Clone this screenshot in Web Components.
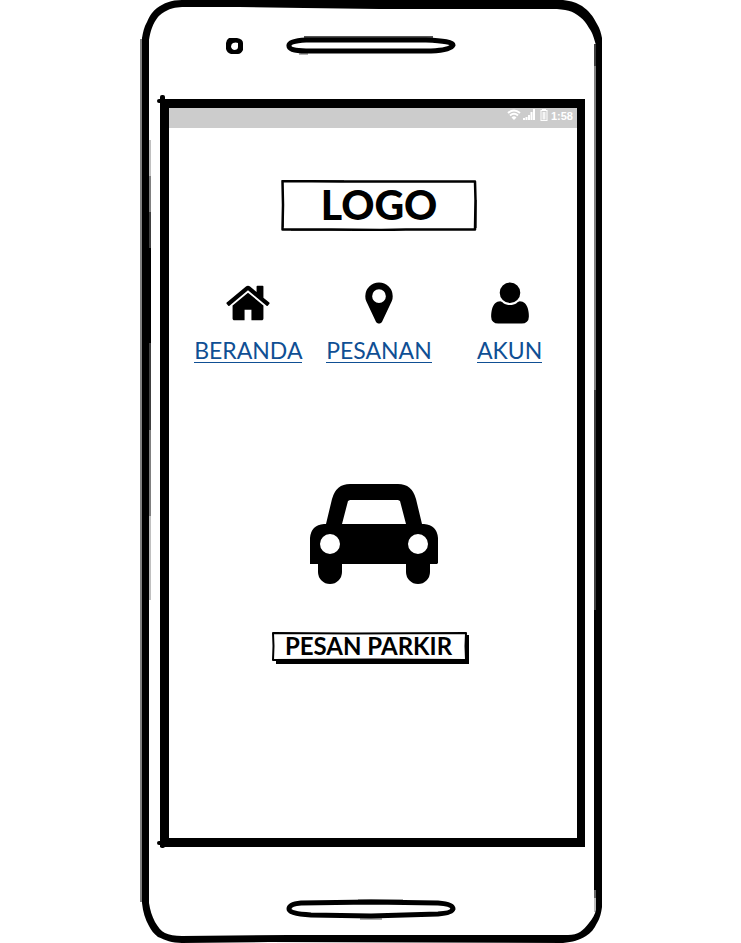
<!DOCTYPE html>
<html lang="id">
<head>
<meta charset="utf-8">
<meta name="viewport" content="width=device-width, initial-scale=1">
<title>Parkir</title>
<style>
  html, body { margin: 0; background: #fff; }
  body { font-family: Lato, "Open Sans", sans-serif; color: #000; }
</style>
</head>
<body>
<phone-frame>
  <status-bar slot="status" time="1:58"></status-bar>
  <app-header>
    <app-logo>LOGO</app-logo>
    <app-nav>
      <nav-item icon="home" href="#beranda">BERANDA</nav-item>
      <nav-item icon="pin" href="#pesanan">PESANAN</nav-item>
      <nav-item icon="user" href="#akun">AKUN</nav-item>
    </app-nav>
  </app-header>
  <park-action>PESAN PARKIR</park-action>
</phone-frame>

<script>
const define = (name, html, setup) => {
  const tpl = document.createElement('template');
  tpl.innerHTML = html;
  customElements.define(name, class extends HTMLElement {
    constructor() {
      super();
      this.attachShadow({ mode: 'open' }).append(tpl.content.cloneNode(true));
    }
    connectedCallback() { if (setup) setup(this, this.shadowRoot); }
  });
};

define('phone-frame', `
  <style>
    :host { display: grid; grid-template-rows: 99px 1fr 96px; position: relative; box-sizing: border-box;
      width: 100%; max-width: 463px; min-height: 100vh; margin: 0 auto; }
    .outline { position: absolute; inset: 0; width: 100%; height: 100%; pointer-events: none; }
    .ear, .chin { display: grid; position: relative; }
    .ear { grid-template-columns: 106px 1fr 106px; align-items: start; padding-top: 34px; }
    .ear .cam { justify-self: end; }
    .ear .speaker, .chin .speaker { justify-self: center; }
    .chin { align-items: start; padding-top: 51px; }
    svg { display: block; }
    .screen { position: relative; display: flex; flex-direction: column; margin: 0 17px 0 21px; border: 9px solid #000; border-right-width: 8px; }
    .screen::before, .screen::after { content: ""; position: absolute; left: -12px; width: 5px; height: 4px; border-radius: 2px; background: #000; }
    .screen::before { top: -9px; }
    .screen::after { bottom: -7px; }
    .tick { position: absolute; left: -9px; width: 5px; height: 6px; border-radius: 2px; background: #000; }
    .tick.t { top: -13px; }
    .tick.b { bottom: -10px; }
  </style>
  <svg class="outline" viewBox="0 0 463 943" preserveAspectRatio="none" aria-hidden="true">
    <path fill="#808080" d="M1 39H3V902H1zM455 66H457V390H455z"/>
    <path fill="#404040" d="M455 44H457V66H455zM455 390H457V610H455z"/>
    <path fill="#c0c0c0" d="M10 140h2v460h-2z"/>
    <path fill="#808080" d="M10 176h2v340h-2z"/>
    <path fill="#404040" d="M10 212h2v218h-2z"/>
    <path d="M10 248h2v95h-2zM455 610h3v280h-3z"/>
    <path fill="#666" d="M455 890h2v8h-2z"/><path fill="#bbb" d="M455 898h2v14h-2z"/>
    <path fill-rule="evenodd" d="M3 38C4 32 5 27 8 22C11 15 14 11 18 8C25 3 32 0 43 0H424C433 1 438 3 443 6C450 11 454 16 458 24C461 29 462 33 463 38V907C462 914 461 918 458 923C455 929 452 933 447 936C440 940 434 942 424 943L130 942L43 943C33 943 26 940 19 937C15 934 12 930 10 926C6 919 4 912 3 903zM10 40V903C11 910 13 916 16 922C19 927 22 931 26 933C30 935 36 936 43 936L150 935H429C434 935 438 934 441 932C444 930 447 927 450 923C454 918 456 914 457 910V45C455 39 454 33 450 28C447 23 445 20 441 17C434 11 427 9 413 9H240L165 8L100 7H46C38 7 33 8 29 10C24 12 21 15 19 17C14 23 11 32 10 40z"/>
  </svg>
  <div class="ear">
    <svg class="cam" width="24" height="24" viewBox="0 0 24 24" aria-hidden="true">
      <path fill-rule="evenodd" d="M8 4H16Q22 5 22 9V16Q20 20 17 20H10Q6 19 5 15V9Q5 6 8 4zM12 9Q10 10 10 13Q11 16 13 16Q17 16 17 13V9Q15 8 12 9z"/>
    </svg>
    <svg class="speaker" width="170" height="24" viewBox="0 0 170 24" aria-hidden="true">
      <path fill="#b0b0b0" d="M13 18h9v3h-9z"/>
      <path fill="#555" d="M18 2h129v2H18z"/>
      <path fill="none" stroke="#000" stroke-width="5" d="M20 6H140Q167 7 167 11Q165 16 145 17H20Q3 17 3 12Q2 7 20 6z"/>
    </svg>
  </div>
  <main class="screen">
    <i class="tick t"></i><i class="tick b"></i>
    <slot name="status"></slot>
    <slot></slot>
  </main>
  <div class="chin">
    <svg class="speaker" width="170" height="24" viewBox="0 0 170 24" aria-hidden="true">
      <path fill="#b0b0b0" d="M72 1h45v2H72zM74 20h22v2H74z"/>
      <path fill="none" stroke="#000" stroke-width="5" d="M15 5L85 4L152 5Q167 6 167 11Q166 15 152 16L85 18L25 17Q3 16 3 11Q3 6 15 5z"/>
    </svg>
  </div>
`);

define('status-bar', `
  <style>
    :host { display: flex; justify-content: flex-end; align-items: flex-start; gap: 3px; height: 20px; box-sizing: border-box;
      padding: 1px 4px 0 0; background: #ccc; color: #fff; font: 600 11px/14px "Liberation Sans", sans-serif; }
    svg { display: block; fill: #fff; }
  </style>
  <svg width="41" height="14" viewBox="0 0 41 14" aria-hidden="true">
    <g fill="none" stroke="#fff" stroke-width="2"><path d="M1 4Q7 -1 13 4M3 6.500Q7 3 11 6.500"/></g>
    <path d="M4.500 8.500Q7 6 9.500 8.500L7 11z"/>
    <path d="M16 9h2v2h-2zM18.500 8h2v3h-2zM21 6h2v5h-2zM23.500 3h2v8h-2zM26 0h2v11h-2z"/>
    <path fill-rule="evenodd" d="M35 0h4v1h1.500v11h-7V1H35zM34.500 2v9h5V2z"/><path opacity=".8" d="M35.500 3h3v7.500h-3z"/>
  </svg>
  <time></time>
`, (el, root) => { root.querySelector('time').textContent = el.getAttribute('time'); });

define('app-header', `
  <style>:host { display: flex; flex-direction: column; align-items: center; gap: 48px; padding: 52px 2px 0 14px; }</style>
  <slot></slot>
`);

define('app-logo', `
  <style>
    :host { display: block; position: relative; }
    h1 { margin: 0; box-sizing: border-box; width: 196px; height: 51px; text-align: center; font-size: 41px; line-height: 50px; font-weight: 900; }
    svg { position: absolute; inset: 0; width: 100%; height: 100%; }
  </style>
  <svg viewBox="0 0 196 51" preserveAspectRatio="none" aria-hidden="true">
    <path fill="#777" d="M35 0h28v1H35zM10 50h60v1H10zM195 20h1v28h-1zM2 25h1v22H2z"/>
    <path fill="none" stroke="#000" stroke-width="2.500" stroke-linejoin="round" d="M1.500 1L60 1.500L194 1.500L194.500 20L194 49.500L125 49.500L100 50L50 49.500L1.500 49.500L2 25z"/>
  </svg>
  <h1><slot></slot></h1>
`);

define('app-nav', `
  <style>:host { display: block; width: 100%; } nav { display: grid; grid-template-columns: repeat(3, 1fr); }</style>
  <nav><slot></slot></nav>
`);

const icons = {
  home: 'M1472 992v480q0 26-19 45t-45 19h-384v-384h-256v384h-384q-26 0-45-19t-19-45v-480q0-1 .5-3t.5-3l575-474 575 474q1 2 1 6zm223-69l-62 74q-8 9-21 11h-3q-13 0-21-7l-692-577-692 577q-12 8-24 7-13-2-21-11l-62-74q-8-10-7-23.5t11-21.5l719-599q32-26 76-26t76 26l244 204v-195q0-14 9-23t23-9h192q14 0 23 9t9 23v408l219 182q10 8 11 21.5t-7 23.5z',
  pin: 'M1152 640q0-106-75-181t-181-75-181 75-75 181 75 181 181 75 181-75 75-181zm256 0q0 109-33 179l-364 774q-16 33-47.5 52t-67.5 19-67.5-19-46.5-52l-365-774q-33-70-33-179 0-212 150-362t362-150 362 150 150 362z',
  user: 'M1600 1405q0 120-73 189.5t-194 69.5h-874q-121 0-194-69.5t-73-189.5q0-53 3.5-103.5t14-109 26.5-108.5 43-97.5 62-81 85.5-53.5 111.5-20q9 0 42 21.5t74.5 48 108 48 133.5 21.5 133.5-21.5 108-48 74.5-48 42-21.5q61 0 111.5 20t85.5 53.5 62 81 43 97.5 26.5 108.5 14 109 3.5 103.5zm-320-893q0 159-112.5 271.5t-271.5 112.5-271.5-112.5-112.5-271.5 112.5-271.5 271.5-112.5 271.5 112.5 112.5 271.5z'
};
define('nav-item', `
  <style>
    :host { display: block; }
    a { display: flex; flex-direction: column; align-items: center; gap: 12px; color: #0f4f94; text-decoration: none; }
    svg { display: block; fill: #000; }
    span { border-bottom: 1px solid #0f4f94; font-size: 23px; line-height: 23px; }
  </style>
  <a><svg width="48" height="48" viewBox="0 0 1792 1792" aria-hidden="true"><path/></svg><span><slot></slot></span></a>
`, (el, root) => {
  root.querySelector('a').href = el.getAttribute('href');
  root.querySelector('path').setAttribute('d', icons[el.getAttribute('icon')]);
});

define('park-action', `
  <style>
    :host { display: flex; flex-direction: column; align-items: center; gap: 48px; padding: 121px 5px 48px 0; }
    svg { display: block; }
    button { position: relative; width: 197px; height: 32px; padding: 0 4px 4px 0; border: 0; background: none; color: #000;
      font: 700 24px/28px Lato, sans-serif; cursor: pointer; white-space: nowrap; }
    button svg { position: absolute; inset: 0; width: 100%; height: 100%; }
    button span { position: relative; }
  </style>
  <svg width="134" height="100" viewBox="-6 0 134 100" aria-hidden="true">
    <path fill-rule="evenodd" d="M0 80V54Q1 41 14 40H16L22 15Q26 0 40 0H88Q102 0 106 15L112 40H114Q127 41 128 54V79L127 80H120V88A12 12 0 0 1 96 88V80H32V88A12 12 0 0 1 8 88V80zM32 40H96L90 17L88 16H40L38 17zM10 60a10 10 0 1 0 20 0a10 10 0 1 0-20 0M98 60a10 10 0 1 0 20 0a10 10 0 1 0-20 0"/>
  </svg>
  <button type="button">
    <svg viewBox="0 0 197 32" preserveAspectRatio="none" aria-hidden="true">
      <path d="M4 28H194V3h3V32H4z"/>
      <path fill="#fff" stroke="#000" stroke-width="2" stroke-linejoin="round" d="M1 1L80 1.500L194 1L193.500 14L194 28L100 27.500L1 28L1.500 14z"/>
    </svg>
    <span><slot></slot></span>
  </button>
`);
</script>
</body>
</html>
